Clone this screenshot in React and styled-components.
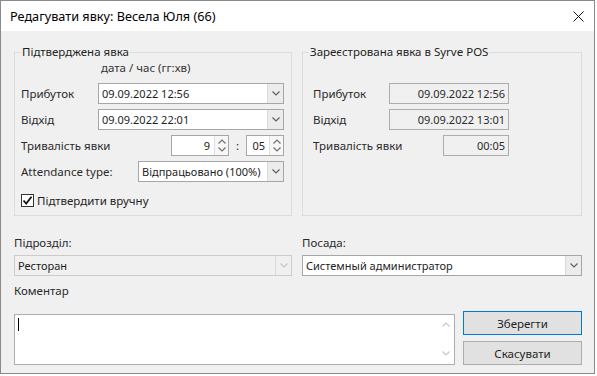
import React from "react";
import styled, { createGlobalStyle } from "styled-components";

const GlobalStyle = createGlobalStyle`
  html, body { margin: 0; padding: 0; background: #ffffff; }
  body {
    font-family: "Noto Sans", "Segoe UI", sans-serif;
    font-size: 11.5px;
    color: #1e1e1e;
  }
  * { box-sizing: border-box; }
`;

const Window = styled.div`
  width: 595px;
  height: 374px;
  border: 1px solid #8a8a8a;
  background: #f0f0f0;
  display: flex;
  flex-direction: column;
`;

const TitleBar = styled.div`
  height: 30px;
  background: #fff;
  display: flex;
  align-items: center;
  justify-content: space-between;
  padding: 0 10px 0 9px;
  font-size: 12.7px;
  color: #000;
`;

const CloseButton = styled.div`
  width: 12px;
  height: 12px;
  display: flex;
  align-items: center;
  justify-content: center;
`;

const Body = styled.div`
  flex: 1;
  padding: 14px 12px 0 13px;
  display: flex;
  flex-direction: column;
`;

const GroupsRow = styled.div`
  display: grid;
  grid-template-columns: 278px 280px;
  column-gap: 10px;
  height: 171px;
`;

const Group = styled.fieldset`
  margin: 0;
  padding: 0;
  border: 1px solid #dcdcdc;
  min-width: 0;
`;

const Legend = styled.legend`
  margin-left: 6px;
  padding: 0 1px;
  line-height: 14px;
  font-size: 11.5px;
`;

const LeftContent = styled.div`
  padding: 2px 7px 8px 6px;
  display: flex;
  flex-direction: column;
`;

const ColumnHeader = styled.div`
  line-height: 14px;
  padding-left: 80px;
  margin-bottom: 8px;
  color: #333;
`;

const FormRow = styled.div`
  display: flex;
  align-items: center;
  justify-content: space-between;
  height: 21px;
  & + & { margin-top: 5px; }
`;

const Label = styled.span`
  line-height: 14px;
  white-space: nowrap;
  color: #2a2a2a;
`;

const Combo = styled.div`
  width: ${(p) => p.$w}px;
  height: 21px;
  border: 1px solid ${(p) => (p.$disabled ? "#cccccc" : "#a6a6a6")};
  background: ${(p) => (p.$disabled ? "#f0f0f0" : "#fff")};
  display: flex;
`;

const ComboText = styled.div`
  flex: 1;
  padding-left: 3px;
  line-height: 19px;
  font-size: 11px;
  white-space: nowrap;
  overflow: hidden;
`;

const ComboButton = styled.div`
  width: 16px;
  border-left: 1px solid #dadada;
  background: ${(p) => (p.$disabled ? "#f0f0f0" : "#ececec")};
  display: flex;
  align-items: center;
  justify-content: center;
`;

const Chevron = ({ up, color = "#606060" }) => (
  <svg width="8" height="5" viewBox="0 0 8 5">
    <path
      d={up ? "M0.5 4.5 L4 1 L7.5 4.5" : "M0.5 0.5 L4 4 L7.5 0.5"}
      fill="none"
      stroke={color}
      strokeWidth="1.2"
    />
  </svg>
);

const SpinGroup = styled.div`
  display: flex;
  align-items: center;
  gap: 7px;
`;

const Spinner = styled.div`
  width: ${(p) => p.$w}px;
  height: 21px;
  border: 1px solid #a6a6a6;
  background: #fff;
  display: flex;
`;

const SpinValue = styled.div`
  flex: 1;
  text-align: right;
  padding-right: 4px;
  line-height: 19px;
  font-size: 11px;
`;

const SpinButtons = styled.div`
  width: 14px;
  border-left: 1px solid #e0e0e0;
  background: #f7f7f7;
  display: flex;
  flex-direction: column;
  align-items: center;
  justify-content: space-around;
  padding: 1px 0;
`;

const Colon = styled.span`
  line-height: 14px;
  width: 3px;
  text-align: center;
`;

const CheckRow = styled.label`
  display: flex;
  align-items: center;
  gap: 3px;
  margin-top: 11px;
  height: 14px;
`;

const CheckBox = styled.span`
  width: 13px;
  height: 13px;
  border: 1px solid #333;
  background: #fff;
  display: flex;
  align-items: center;
  justify-content: center;
`;

const RightContent = styled.div`
  padding: 24px 0 0 10px;
  display: grid;
  grid-template-columns: 76px 120px;
  grid-auto-rows: 21px;
  row-gap: 5px;
  align-items: center;
`;

const ReadBox = styled.div`
  width: ${(p) => p.$w}px;
  height: 21px;
  justify-self: end;
  border: 1px solid #adadad;
  background: #f0f0f0;
  text-align: right;
  padding-right: 3px;
  line-height: 19px;
  font-size: 11px;
  color: #2a2a2a;
`;

const FieldsGrid = styled.div`
  display: grid;
  grid-template-columns: 278px 280px;
  column-gap: 10px;
  margin-top: 20px;
`;

const Field = styled.div`
  display: flex;
  flex-direction: column;
  gap: 5px;
`;

const FieldLabel = styled.div`
  line-height: 14px;
  color: #2a2a2a;
`;

const CommentLabel = styled(FieldLabel)`
  margin-top: 8px;
`;

const CommentRow = styled.div`
  display: flex;
  align-items: flex-end;
  gap: 8px;
  margin-top: 13px;
`;

const TextArea = styled.div`
  width: 442px;
  height: 51px;
  border: 1px solid #abadb3;
  background: #fff;
  display: flex;
`;

const TextInput = styled.div`
  flex: 1;
  padding: 3px 0 0 3px;
`;

const Caret = styled.div`
  width: 1px;
  height: 13px;
  background: #000;
`;

const ScrollBar = styled.div`
  width: 16px;
  display: flex;
  flex-direction: column;
  align-items: center;
  justify-content: space-between;
  padding: 7px 0 8px;
`;

const ButtonColumn = styled.div`
  display: flex;
  flex-direction: column;
  gap: 6px;
`;

const Button = styled.button`
  width: 119px;
  height: 24px;
  margin: 0;
  padding: 0;
  border: 1px solid ${(p) => (p.$default ? "#0078d7" : "#adadad")};
  background: #e1e1e1;
  font-family: inherit;
  font-size: 11.5px;
  color: #1e1e1e;
`;

export default function App() {
  return (
    <>
      <GlobalStyle />
      <Window>
        <TitleBar>
          <span>Редагувати явку: Весела Юля (66)</span>
          <CloseButton>
            <svg width="11" height="11" viewBox="0 0 11 11">
              <path d="M0.5 0.5 L10.5 10.5 M10.5 0.5 L0.5 10.5" stroke="#111" strokeWidth="1" />
            </svg>
          </CloseButton>
        </TitleBar>
        <Body>
          <GroupsRow>
            <Group>
              <Legend>Підтверджена явка</Legend>
              <LeftContent>
                <ColumnHeader>дата / час (гг:хв)</ColumnHeader>
                <FormRow>
                  <Label>Прибуток</Label>
                  <Combo $w={186}>
                    <ComboText>09.09.2022 12:56</ComboText>
                    <ComboButton><Chevron /></ComboButton>
                  </Combo>
                </FormRow>
                <FormRow>
                  <Label>Відхід</Label>
                  <Combo $w={186}>
                    <ComboText>09.09.2022 22:01</ComboText>
                    <ComboButton><Chevron /></ComboButton>
                  </Combo>
                </FormRow>
                <FormRow>
                  <Label>Тривалість явки</Label>
                  <SpinGroup>
                    <Spinner $w={58}>
                      <SpinValue>9</SpinValue>
                      <SpinButtons>
                        <Chevron up color="#707070" />
                        <Chevron color="#707070" />
                      </SpinButtons>
                    </Spinner>
                    <Colon>:</Colon>
                    <Spinner $w={38}>
                      <SpinValue>05</SpinValue>
                      <SpinButtons>
                        <Chevron up color="#707070" />
                        <Chevron color="#707070" />
                      </SpinButtons>
                    </Spinner>
                  </SpinGroup>
                </FormRow>
                <FormRow>
                  <Label>Attendance type:</Label>
                  <Combo $w={146}>
                    <ComboText>Відпрацьовано (100%)</ComboText>
                    <ComboButton><Chevron /></ComboButton>
                  </Combo>
                </FormRow>
                <CheckRow>
                  <CheckBox>
                    <svg width="11" height="11" viewBox="0 0 11 11">
                      <path d="M1.5 5.5 L4.2 8.5 L9.5 1.8" fill="none" stroke="#111" strokeWidth="1.8" />
                    </svg>
                  </CheckBox>
                  <span>Підтвердити вручну</span>
                </CheckRow>
              </LeftContent>
            </Group>
            <Group>
              <Legend>Зареєстрована явка в Syrve POS</Legend>
              <RightContent>
                <Label>Прибуток</Label>
                <ReadBox $w={120}>09.09.2022 12:56</ReadBox>
                <Label>Відхід</Label>
                <ReadBox $w={120}>09.09.2022 13:01</ReadBox>
                <Label>Тривалість явки</Label>
                <ReadBox $w={66}>00:05</ReadBox>
              </RightContent>
            </Group>
          </GroupsRow>
          <FieldsGrid>
            <Field>
              <FieldLabel>Підрозділ:</FieldLabel>
              <Combo $w={278} $disabled>
                <ComboText>Ресторан</ComboText>
                <ComboButton $disabled><Chevron color="#c4c4c4" /></ComboButton>
              </Combo>
            </Field>
            <Field>
              <FieldLabel>Посада:</FieldLabel>
              <Combo $w={280}>
                <ComboText>Системный администратор</ComboText>
                <ComboButton><Chevron /></ComboButton>
              </Combo>
            </Field>
          </FieldsGrid>
          <CommentLabel>Коментар</CommentLabel>
          <CommentRow>
            <TextArea>
              <TextInput><Caret /></TextInput>
              <ScrollBar>
                <Chevron up color="#c8c8c8" />
                <Chevron color="#c8c8c8" />
              </ScrollBar>
            </TextArea>
            <ButtonColumn>
              <Button $default>Зберегти</Button>
              <Button>Скасувати</Button>
            </ButtonColumn>
          </CommentRow>
        </Body>
      </Window>
    </>
  );
}
